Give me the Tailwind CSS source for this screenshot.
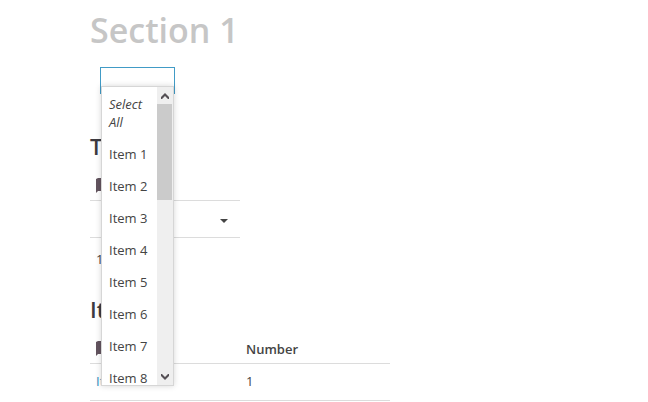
<!doctype html>
<html lang="en">
<head>
  <meta charset="UTF-8">
  <meta name="viewport" content="width=device-width, initial-scale=1.0">
  <title>Section 1</title>
  <script src="https://cdn.jsdelivr.net/npm/@tailwindcss/browser@4"></script>
</head>
<body class="h-screen overflow-hidden bg-white font-['Open_Sans','Noto_Sans',sans-serif] text-[13px] leading-[18px] text-[#444]">
  <main class="px-[90px] pt-2">
    <h1 class="text-[34px] leading-[44px] font-semibold text-[#c6c6c6]">Section 1</h1>

    <!-- multi select with its open list -->
    <div class="relative mt-[15px] ml-[10px] w-[75px]">
      <input type="text" role="combobox" aria-label="Items" aria-expanded="true" aria-controls="list" class="block h-[27px] w-full border border-[#419bc6] bg-white px-1 outline-none">
      <div class="absolute top-[19px] left-px z-10 flex h-[300px] w-[73px] border border-[#d6d6d6] bg-white shadow-[0_0_6px_rgba(0,0,0,0.16)]">
        <ul id="list" role="listbox" class="min-w-0 flex-1 overflow-hidden pt-px">
          <li role="option" class="px-[7px] py-[7px] italic">Select All</li>
          <li role="option" class="px-[7px] py-[7px] whitespace-nowrap">Item 1</li>
          <li role="option" class="px-[7px] py-[7px] whitespace-nowrap">Item 2</li>
          <li role="option" class="px-[7px] py-[7px] whitespace-nowrap">Item 3</li>
          <li role="option" class="px-[7px] py-[7px] whitespace-nowrap">Item 4</li>
          <li role="option" class="px-[7px] py-[7px] whitespace-nowrap">Item 5</li>
          <li role="option" class="px-[7px] py-[7px] whitespace-nowrap">Item 6</li>
          <li role="option" class="px-[7px] py-[7px] whitespace-nowrap">Item 7</li>
          <li role="option" class="px-[7px] py-[7px] whitespace-nowrap">Item 8</li>
        </ul>
        <div class="flex w-4 flex-col bg-[#efefef]">
          <button type="button" aria-label="Scroll up" class="flex h-[17px] items-center justify-center">
            <svg class="h-[6px] w-[8px]" viewBox="0 0 8 6" fill="#555055"><path d="M4 0 8 4V6H7L4 3 1 6H0V4Z"/></svg>
          </button>
          <div class="mr-px h-24 bg-[#cbcbcb]"></div>
          <button type="button" aria-label="Scroll down" class="mt-auto flex h-[17px] items-center justify-center">
            <svg class="h-[6px] w-[8px]" viewBox="0 0 8 6" fill="#555055"><path d="M4 6 8 2V0H7L4 3 1 0H0V2Z"/></svg>
          </button>
        </div>
      </div>
    </div>

    <h2 class="mt-[37px] text-[22px] leading-[30px] font-semibold text-[#3c3a40]">Table</h2>
    <table class="mt-1 w-[150px] border-collapse">
      <thead>
        <tr class="h-[35px] border-b border-[#dcdcdc]">
          <th class="px-[6px] pt-2 text-left">
            <svg class="h-4 w-4" viewBox="0 0 16 16" fill="#63545f"><path d="M0 1 2 0h14v13H2l-2 2Z"/></svg>
          </th>
        </tr>
        <tr class="h-[37px] border-b border-[#dcdcdc]">
          <td class="px-[6px]">
            <div class="relative">
              <select aria-label="Filter" class="block h-6 w-full appearance-none bg-transparent outline-none"><option></option></select>
              <svg class="pointer-events-none absolute top-3 right-[6px] h-[4px] w-[8px]" viewBox="0 0 8 4" fill="#444"><path d="M0 0h8L4 4Z"/></svg>
            </div>
          </td>
        </tr>
      </thead>
      <tbody>
        <tr class="h-[42px]"><td class="px-[6px] pt-[2px]">1</td></tr>
      </tbody>
    </table>

    <h2 class="mt-[15px] text-[22px] leading-[30px] font-semibold text-[#3c3a40]">Item</h2>
    <table class="mt-[2px] w-[300px] table-fixed border-collapse">
      <thead>
        <tr class="h-[37px] border-b border-[#dcdcdc]">
          <th class="px-[6px] pt-[10px] text-left">
            <svg class="h-4 w-4" viewBox="0 0 16 16" fill="#63545f"><path d="M0 1 2 0h14v13H2l-2 2Z"/></svg>
          </th>
          <th class="px-[6px] pt-[10px] text-left font-semibold">Number</th>
        </tr>
      </thead>
      <tbody>
        <tr class="h-[37px] border-b border-[#dcdcdc]">
          <td class="px-[6px] pb-[2px]"><a href="#" class="text-[#2a8dbf]">Item</a></td>
          <td class="px-[6px] pb-[2px]">1</td>
        </tr>
      </tbody>
    </table>
  </main>
</body>
</html>
